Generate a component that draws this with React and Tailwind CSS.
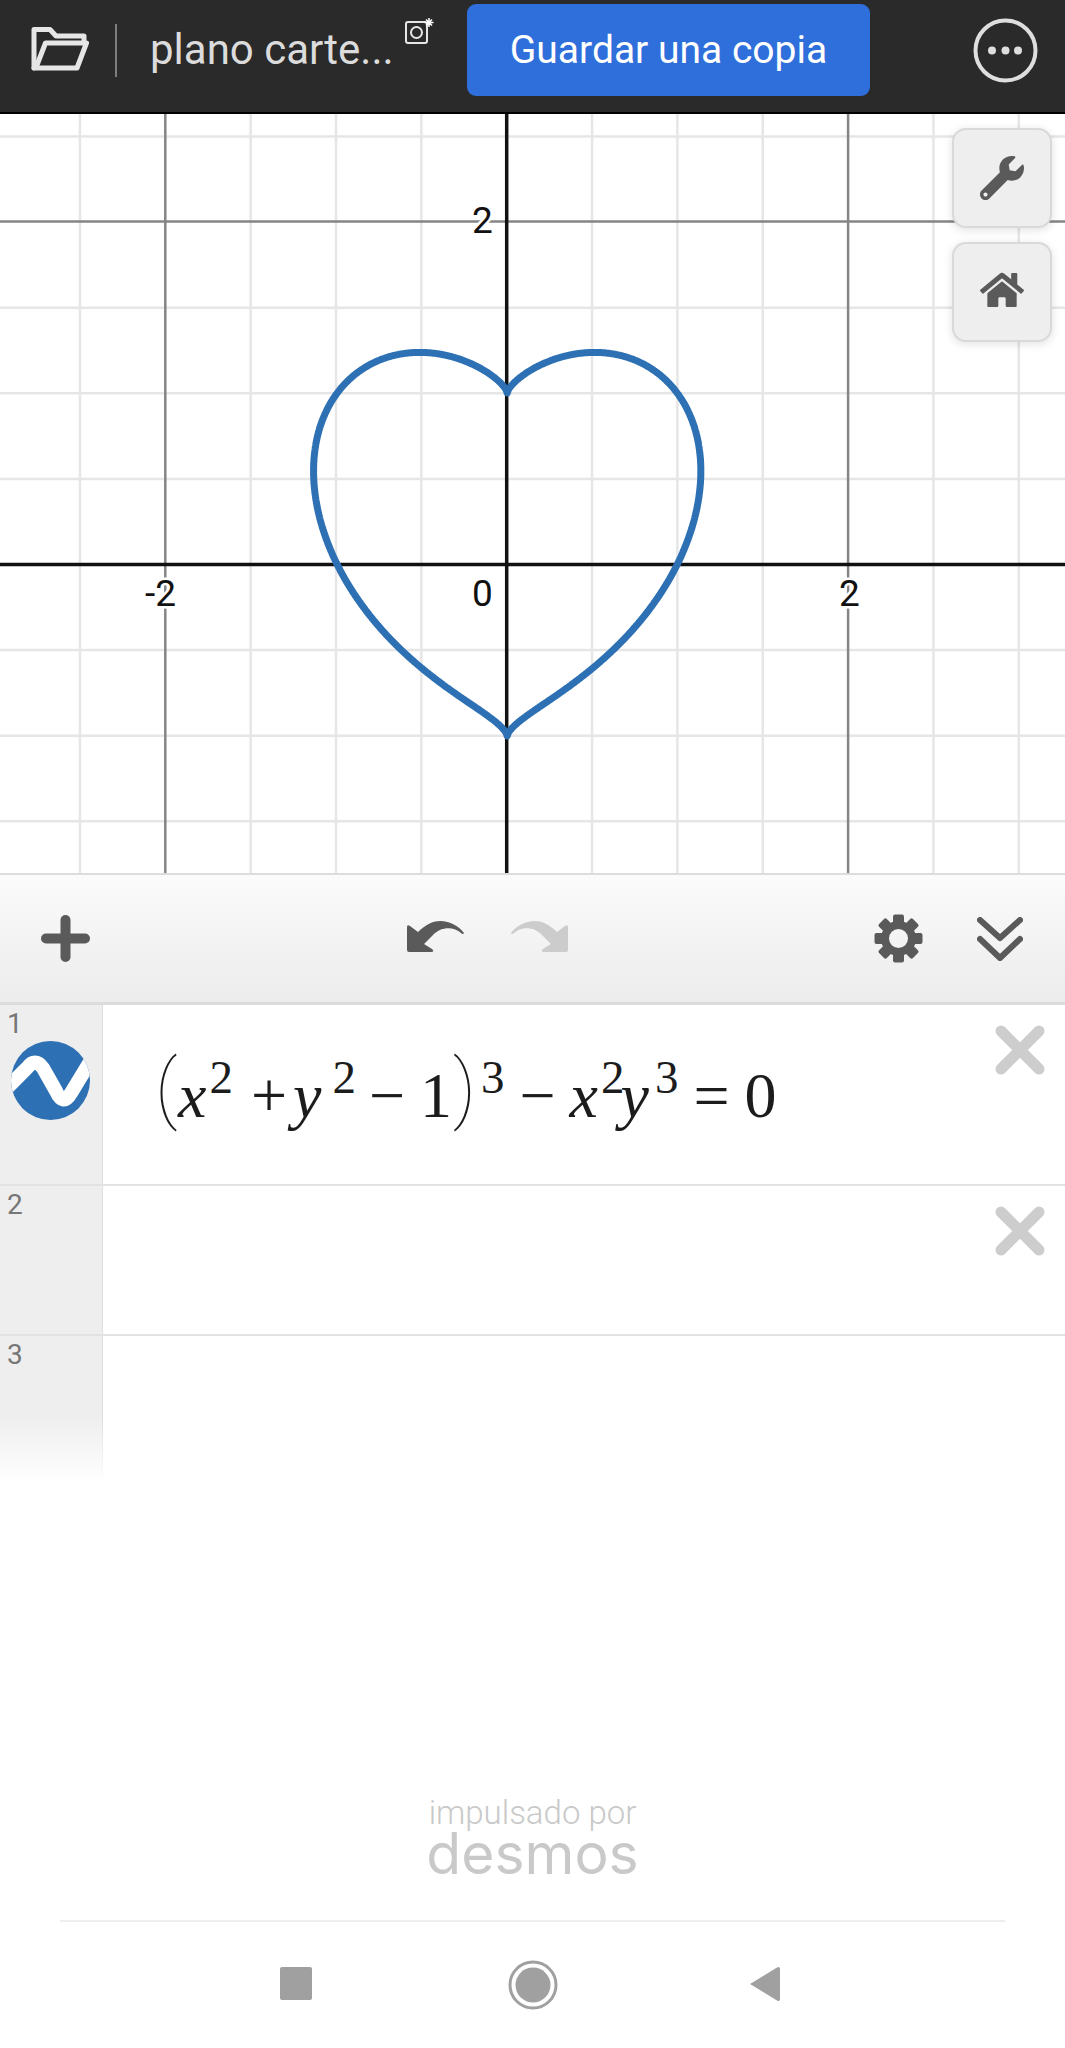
import React from 'react';
import { FaWrench, FaHome } from 'react-icons/fa';

// graph geometry, in page pixels relative to the graph panel
const W = 1065;
const H = 759;
const CX = 506.7;
const CY = 450.5;
const UNIT = 170.7;

const minorX = [-6, -5, -3, -2, -1, 1, 2, 3, 5, 6].map((i) => CX + i * UNIT / 2);
const minorY = [-5, -3, -2, -1, 1, 2, 3].map((i) => CY + i * 85.6);
const majorX = [CX - 2 * UNIT, CX + 2 * UNIT];
const majorY = [CY - 2 * 171.5];

// (x^2 + y^2 - 1)^3 = x^2 y^3, solved for y
const heartPath = () => {
    const xMax = 1.13904;
    const steps = 400;
    const upper = [];
    const lower = [];
    for (let i = 0; i <= steps; i++) {
        const x = xMax * Math.sin((i / steps) * (Math.PI / 2));
        const a = Math.pow(x, 2 / 3);
        const root = Math.sqrt(Math.max(0, a * a + 4 * (1 - x * x)));
        upper.push([x, (a + root) / 2]);
        lower.push([x, (a - root) / 2]);
    }
    const right = [...lower, ...upper.reverse()];
    const left = [...right].reverse().map(([x, y]) => [-x, y]);
    return [...right, ...left]
        .map(([x, y], i) => `${i ? 'L' : 'M'}${(CX + 0.5 + x * 170).toFixed(1)} ${(CY - y * 171.5).toFixed(1)}`)
        .join('') + 'Z';
};

const Graph = () => (
    <svg width={W} height={H} viewBox={`0 0 ${W} ${H}`} className="block">
        <rect width={W} height={H} fill="#fff" />
        {minorX.map((x) => <line key={x} x1={x} x2={x} y1="0" y2={H} stroke="#e6e6e6" strokeWidth="2.5" />)}
        {minorY.map((y) => <line key={y} x1="0" x2={W} y1={y} y2={y} stroke="#e6e6e6" strokeWidth="2.5" />)}
        {majorX.map((x) => <line key={x} x1={x} x2={x} y1="0" y2={H} stroke="#858585" strokeWidth="2.5" />)}
        {majorY.map((y) => <line key={y} x1="0" x2={W} y1={y} y2={y} stroke="#858585" strokeWidth="2.5" />)}
        <line x1={CX} x2={CX} y1="0" y2={H} stroke="#111" strokeWidth="3.5" />
        <line x1="0" x2={W} y1={CY} y2={CY} stroke="#111" strokeWidth="3.5" />
        <path d={heartPath()} fill="none" stroke="#2d70b3" strokeWidth="7" strokeLinejoin="round" />
        <g fontFamily="Roboto, sans-serif" fontSize="37" fill="#111" stroke="#fff" strokeWidth="5" paintOrder="stroke">
            <text x="472" y="119">2</text>
            <text x="145" y="492">-2</text>
            <text x="472" y="492">0</text>
            <text x="839" y="492">2</text>
        </g>
    </svg>
);

const FolderIcon = () => (
    <svg width="58" height="45" viewBox="0 0 58 45" fill="none" stroke="#e6e6e6" strokeWidth="5" strokeLinejoin="round" strokeLinecap="round">
        <path d="M3 42V3.5H19L25 10H53V16" />
        <path d="M3 42H46L55.5 17H14.5L6 39" />
    </svg>
);

const CameraBadge = () => (
    <svg width="30" height="26" viewBox="0 0 30 26" fill="none" stroke="#e6e6e6" strokeWidth="2">
        <rect x="1" y="4" width="21" height="21" rx="2" />
        <circle cx="11.5" cy="14.5" r="5.5" />
        <path d="M24 0V9M19.5 4.5H28.5M21 1.5L27 7.5M27 1.5L21 7.5" stroke="#fff" strokeWidth="1.5" />
    </svg>
);

const MenuIcon = () => (
    <svg width="65" height="65" viewBox="0 0 65 65">
        <circle cx="32.5" cy="32.5" r="30" fill="none" stroke="#dedede" strokeWidth="4" />
        <circle cx="19" cy="32.5" r="4" fill="#dedede" />
        <circle cx="32.5" cy="32.5" r="4" fill="#dedede" />
        <circle cx="45" cy="32.5" r="4" fill="#dedede" />
    </svg>
);

const PlusIcon = () => (
    <svg width="49" height="47" viewBox="0 0 49 47" stroke="#5a5a5a" strokeWidth="10" strokeLinecap="round">
        <path d="M24.5 5V42M5 23.5H44" />
    </svg>
);

const UndoIcon = ({ color, flip }) => (
    <svg width="58" height="32" viewBox="0 0 58 32" fill={color} className={flip ? '-scale-x-100' : ''}>
        <path d="M1 6Q1 3 4 5L12 11C20 3 28 0 34 0C44 0 53 5 58 12Q57 14 55 12C48 6 36 5 27 14L18 23L26 28Q29 31 25 31H3Q1 31 1 29Z" />
    </svg>
);

const GearIcon = () => (
    <svg width="49" height="49" viewBox="-24.5 -24.5 49 49" fill="#5a5a5a">
        <circle r="13.5" fill="none" stroke="#5a5a5a" strokeWidth="8" />
        {[0, 45, 90, 135, 180, 225, 270, 315].map((a) => (
            <rect key={a} x="-5.5" y="-24" width="11" height="9" rx="2" transform={`rotate(${a})`} />
        ))}
    </svg>
);

const ChevronsIcon = () => (
    <svg width="46" height="44" viewBox="0 0 46 44" fill="none" stroke="#5a5a5a" strokeWidth="6" strokeLinecap="round" strokeLinejoin="round">
        <path d="M3 3L23 21L43 3M3 22L23 41L43 22" />
    </svg>
);

const CloseIcon = () => (
    <svg width="50" height="50" viewBox="0 0 50 50" stroke="#cdcdcd" strokeWidth="11" strokeLinecap="round">
        <path d="M6 6L44 44M44 6L6 44" />
    </svg>
);

const DesmosMark = () => (
    <svg width="79" height="79" viewBox="0 0 79 79">
        <defs>
            <clipPath id="mark"><circle cx="39.5" cy="39.5" r="39.5" /></clipPath>
        </defs>
        <circle cx="39.5" cy="39.5" r="39.5" fill="#2d70b3" />
        <path d="M-3 46L16 27Q24 16 32 27L45 50Q52 66 60 52L82 16" fill="none" stroke="#fff" strokeWidth="14" clipPath="url(#mark)" />
    </svg>
);

const Sup = ({ className = '', children }) => (
    <span className={`text-[47px] relative -top-[24px] ${className}`}>{children}</span>
);

const Paren = ({ className = '', children }) => (
    <span className={`text-[76px] font-thin -translate-y-[3px] ${className}`} style={{ fontFamily: 'Roboto, sans-serif' }}>{children}</span>
);

const Formula = () => (
    <div className="flex items-baseline whitespace-nowrap text-[64px] leading-none text-[#1c1c1c]" style={{ fontFamily: '"Liberation Serif", serif' }}>
        <Paren className="w-[23px]">(</Paren>
        <i>x</i>
        <Sup className="ml-[3px]">2</Sup>
        <span className="ml-[18px]">+</span>
        <i className="ml-[6px]">y</i>
        <Sup className="ml-[11px]">2</Sup>
        <span className="ml-[13px]">−</span>
        <span className="ml-[15px]">1</span>
        <Paren className="w-[31px] ml-[1px]">)</Paren>
        <Sup className="ml-[-3px]">3</Sup>
        <span className="ml-[15px]">−</span>
        <i className="ml-[14px]">x</i>
        <Sup className="ml-[3px]">2</Sup>
        <i className="ml-[-4px]">y</i>
        <Sup className="ml-[6px]">3</Sup>
        <span className="ml-[15px]">=</span>
        <span className="ml-[15px]">0</span>
    </div>
);

const RowNumber = ({ children }) => (
    <span className="absolute left-[7px] top-[3px] text-[28px] leading-[32px] text-[#777]">{children}</span>
);

const FloatingButton = ({ className = '', children }) => (
    <div className={`w-[100px] h-[100px] rounded-[14px] bg-[#eeeeee] border-[2px] border-[#d9d9d9] shadow-[0_2px_10px_rgba(0,0,0,0.12)] flex items-center justify-center text-[#5a5a5a] ${className}`}>
        {children}
    </div>
);

export default function App() {
    return (
        <div className="w-[1065px] h-[2048px] overflow-hidden bg-white flex flex-col" style={{ fontFamily: 'Roboto, sans-serif' }}>
            {/* Top bar */}
            <div className="h-[114px] shrink-0 bg-[#2a2a2a] border-b-[2px] border-black flex items-start">
                <div className="ml-[31px] mt-[26px]"><FolderIcon /></div>
                <div className="ml-[26px] mt-[24px] w-[2px] h-[53px] bg-[#7d7d7d]"></div>
                <span className="ml-[33px] mt-[25px] w-[255px] text-[42px] leading-[50px] whitespace-nowrap text-[#dcdcdc]">plano carte...</span>
                <div className="mt-[18px]"><CameraBadge /></div>
                <div className="ml-[32px] mt-[4px] w-[403px] h-[92px] rounded-[9px] bg-[#2f6fdc] flex items-center justify-center text-[39px] text-white">
                    Guardar una copia
                </div>
                <div className="ml-[103px] mt-[18px]"><MenuIcon /></div>
            </div>

            {/* Graph */}
            <div className="relative h-[759px] shrink-0">
                <Graph />
                <div className="absolute left-[952px] top-[14px] flex flex-col gap-[14px]">
                    <FloatingButton><FaWrench size={44} /></FloatingButton>
                    <FloatingButton className="pb-[4px]"><FaHome size={44} /></FloatingButton>
                </div>
            </div>

            {/* Expression toolbar */}
            <div className="h-[132px] shrink-0 border-t-[2px] border-b-[3px] border-[#dcdcdc] bg-gradient-to-b from-[#fbfbfb] to-[#ececec] flex items-center">
                <div className="ml-[41px]"><PlusIcon /></div>
                <div className="ml-[316px] mb-[4px]"><UndoIcon color="#5a5a5a" /></div>
                <div className="ml-[47px] mb-[4px]"><UndoIcon color="#cccccc" flip /></div>
                <div className="ml-[305px]"><GearIcon /></div>
                <div className="ml-[54px]"><ChevronsIcon /></div>
            </div>

            {/* Expression list */}
            <div className="relative flex h-[181px] shrink-0 border-b-[2px] border-[#e2e2e2]">
                <div className="relative w-[103px] shrink-0 bg-[#eeeeee] border-r border-[#dddddd]">
                    <RowNumber>1</RowNumber>
                    <div className="absolute left-[11px] top-[36px]"><DesmosMark /></div>
                </div>
                <div className="flex-1 pl-[52px] pt-[48px]"><Formula /></div>
                <div className="absolute left-[995px] top-[20px]"><CloseIcon /></div>
            </div>
            <div className="relative flex h-[150px] shrink-0 border-b-[2px] border-[#e2e2e2]">
                <div className="relative w-[103px] shrink-0 bg-[#eeeeee] border-r border-[#dddddd]">
                    <RowNumber>2</RowNumber>
                </div>
                <div className="absolute left-[995px] top-[20px]"><CloseIcon /></div>
            </div>
            <div className="relative flex h-[146px] shrink-0">
                <div className="relative w-[103px] shrink-0 bg-gradient-to-b from-[#eeeeee] from-[56%] to-white">
                    <RowNumber>3</RowNumber>
                    <div className="absolute right-0 top-0 bottom-0 w-px bg-gradient-to-b from-[#dddddd] from-[56%] to-white"></div>
                </div>
            </div>

            {/* Powered by */}
            <div className="mt-auto flex flex-col items-center text-[#c9c9c9]">
                <span className="text-[33px] leading-[34px] font-light">impulsado por</span>
                <span className="text-[57px] leading-[46px] mt-[1px]" style={{ fontFamily: 'Inter, sans-serif' }}>desmos</span>
            </div>

            {/* Android nav bar */}
            <div className="mt-[43px] mx-[60px] h-[128px] shrink-0 border-t-[2px] border-[#eeeeee] flex items-start">
                <div className="ml-[220px] mt-[45px] w-[32px] h-[33px] rounded-[2px] bg-[#a0a0a0]"></div>
                <svg className="ml-[196px] mt-[38px]" width="50" height="50" viewBox="0 0 50 50">
                    <circle cx="25" cy="25" r="23" fill="none" stroke="#a0a0a0" strokeWidth="3" />
                    <circle cx="25" cy="25" r="17.5" fill="#a0a0a0" />
                </svg>
                <svg className="ml-[190px] mt-[44px]" width="32" height="36" viewBox="0 0 32 36">
                    <path d="M2 18L29 1.5Q32 0 32 3V33Q32 36 29 34.5Z" fill="#a0a0a0" />
                </svg>
            </div>
        </div>
    );
}
